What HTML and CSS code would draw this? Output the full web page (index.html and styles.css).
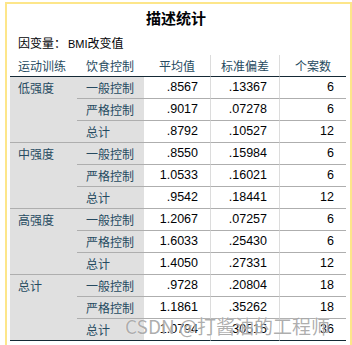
FILE: index.html
```html
<!DOCTYPE html>
<html lang="zh">
<head>
<meta charset="utf-8">
<title>描述统计</title>
<link rel="stylesheet" href="styles.css">
</head>
<body>
<div class="frame">
  <div class="title">描述统计</div>
  <div class="dep">因变量：<span class="latin">BMI</span>改变值</div>
  <table class="stats">
    <colgroup><col class="c1"><col class="c2"><col class="c3"><col class="c4"><col class="c5"></colgroup>
    <thead>
      <tr><th class="lab">运动训练</th><th class="lab">饮食控制</th><th class="hd sep">平均值</th><th class="hd sep">标准偏差</th><th class="hd">个案数</th></tr>
    </thead>
    <tbody>
      <tr><td rowspan="3" class="grp">低强度</td><td class="lab2">一般控制</td><td class="num sep">.8567</td><td class="num sep">.13367</td><td class="num">6</td></tr>
      <tr><td class="lab2">严格控制</td><td class="num sep">.9017</td><td class="num sep">.07278</td><td class="num">6</td></tr>
      <tr class="end"><td class="lab2">总计</td><td class="num sep">.8792</td><td class="num sep">.10527</td><td class="num">12</td></tr>

      <tr><td rowspan="3" class="grp">中强度</td><td class="lab2">一般控制</td><td class="num sep">.8550</td><td class="num sep">.15984</td><td class="num">6</td></tr>
      <tr><td class="lab2">严格控制</td><td class="num sep">1.0533</td><td class="num sep">.16021</td><td class="num">6</td></tr>
      <tr class="end"><td class="lab2">总计</td><td class="num sep">.9542</td><td class="num sep">.18441</td><td class="num">12</td></tr>

      <tr><td rowspan="3" class="grp">高强度</td><td class="lab2">一般控制</td><td class="num sep">1.2067</td><td class="num sep">.07257</td><td class="num">6</td></tr>
      <tr><td class="lab2">严格控制</td><td class="num sep">1.6033</td><td class="num sep">.25430</td><td class="num">6</td></tr>
      <tr class="end"><td class="lab2">总计</td><td class="num sep">1.4050</td><td class="num sep">.27331</td><td class="num">12</td></tr>

      <tr><td rowspan="3" class="grp">总计</td><td class="lab2">一般控制</td><td class="num sep">.9728</td><td class="num sep">.20804</td><td class="num">18</td></tr>
      <tr><td class="lab2">严格控制</td><td class="num sep">1.1861</td><td class="num sep">.35262</td><td class="num">18</td></tr>
      <tr class="end last"><td class="lab2">总计</td><td class="num sep">1.0794</td><td class="num sep">.30515</td><td class="num">36</td></tr>
    </tbody>
  </table>
  <div class="watermark">CSDN @打酱油的工程师</div>
</div>
</body>
</html>
```

FILE: styles.css
```css
html, body {
  margin: 0;
  padding: 0;
  background: #ffffff;
  overflow: hidden;
}

body {
  font-family: "Noto Sans CJK SC", "Liberation Sans", sans-serif;
}

.frame {
  position: relative;
  margin: 2px 0 0 5px;
  width: 340px;
  height: 343px;
  padding-left: 3px;
  border: 2px solid #fde68a;
  border-bottom: none;
  background: #ffffff;
}

.title {
  margin-top: 4px;
  padding-right: 8px;
  height: 20px;
  line-height: 20px;
  text-align: center;
  font-size: 15px;
  font-weight: bold;
  color: #010205;
}

.dep {
  margin-top: 7px;
  padding-left: 8px;
  height: 16px;
  line-height: 16px;
  font-size: 12px;
  color: #010205;
}

.dep .latin {
  font-family: "Liberation Sans", sans-serif;
  font-size: 11px;
  margin-left: 2px;
}

.stats {
  margin-top: 4px;
  width: 336px;
  table-layout: fixed;
  border-collapse: separate;
  border-spacing: 0;
}

.c1 { width: 67px; }
.c2 { width: 67px; }
.c3 { width: 67px; }
.c4 { width: 69px; }
.c5 { width: 66px; }

.stats th,
.stats td {
  padding: 0;
  line-height: 21px;
  white-space: nowrap;
  overflow: hidden;
}

.stats th {
  font-weight: normal;
  font-size: 12px;
  color: #264a60;
  border-bottom: 1px solid #152935;
  background: #ffffff;
}

.stats th.lab {
  text-align: left;
  padding-left: 8px;
}

.stats th.lab + th.lab {
  padding-left: 9px;
}

.stats th.hd {
  text-align: center;
}

.stats .sep {
  border-right: 1px solid #dcdcdc;
}

.stats td.grp {
  vertical-align: top;
  padding-left: 8px;
  font-size: 12px;
  color: #264a60;
  background: #e0e0e0;
  border-bottom: 1px solid #aeaeae;
}

.stats td.lab2 {
  padding-left: 9px;
  font-size: 12px;
  color: #264a60;
  background: #e0e0e0;
  border-bottom: 1px solid #aeaeae;
}

.stats td.num {
  font-family: "Liberation Sans", sans-serif;
  font-size: 12.5px;
  color: #010205;
  text-align: right;
  padding-right: 12px;
  border-bottom: 1px solid #aeaeae;
}

.stats tr.last td,
.stats tr.last ~ tr td {
  border-bottom-color: #152935;
}

.stats tbody tr:nth-child(10) td.grp {
  border-bottom-color: #152935;
}

.watermark {
  position: absolute;
  left: 118px;
  top: 311px;
  line-height: 22px;
  font-size: 19px;
  color: rgba(120, 120, 120, 0.6);
  text-shadow: 0 0 1px #ffffff;
  white-space: nowrap;
  pointer-events: none;
}
```
